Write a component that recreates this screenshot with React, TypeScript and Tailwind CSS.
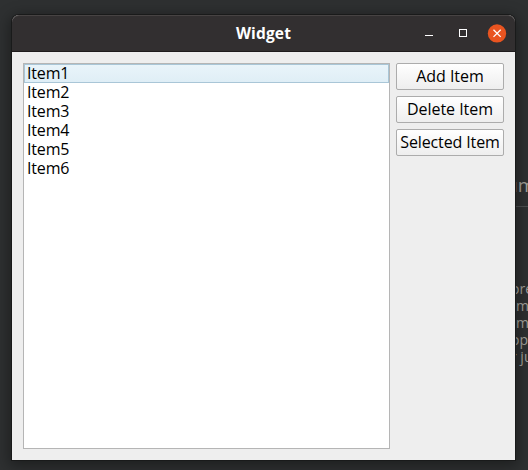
const items = ['Item1', 'Item2', 'Item3', 'Item4', 'Item5', 'Item6'];
const actions = [
  { label: 'Add Item', text: 'tracking-[-0.05px]' },
  { label: 'Delete Item', text: 'tracking-[-0.05px]' },
  { label: 'Selected Item', text: 'tracking-[-0.12px]' },
];
const lines = [
  { text: 'ore', pad: 'pl-[511px]' },
  { text: 'm', pad: 'pl-[516px]' },
  { text: 'm', pad: 'pl-[516px]' },
  { text: 'opp', pad: 'pl-[511px]' },
  { text: 'r ju', pad: 'pl-[511px]' },
];

function Backdrop() {
  return (
    <div className="absolute inset-0 overflow-hidden text-[#a3a19c]">
      <div className="h-[206px] pl-[506px] pt-[172px] text-[19px] leading-[27px]">um</div>
      <div className="ml-[500px] h-px bg-[#4c4f50]" />
      <div className="mt-[73px] text-[14px] leading-[17px]">
        {lines.map((line, i) => (
          <div key={i} className={`h-[17px] whitespace-pre ${line.pad}`}>
            {line.text}
          </div>
        ))}
      </div>
    </div>
  );
}

function TitleBar() {
  return (
    <header className="grid h-[37px] shrink-0 grid-cols-[1fr_auto_1fr] items-center rounded-t-[7px] border-b border-t border-b-[#1f1c1d] border-t-[#474343] bg-[#322f30] text-white">
      <span />
      <h1 className="-mt-px text-[15.5px] font-bold leading-[20px] tracking-[0.15px]">Widget</h1>
      <div className="flex items-center justify-end pr-[8px]">
        <svg width="82" height="19" viewBox="0 0 82 19" fill="none">
          <path d="M0 11.5h8" stroke="white" />
          <rect x="34.5" y="5.5" width="7" height="7" stroke="white" />
          <circle cx="72" cy="9.4" r="9.2" fill="#e95420" />
          <path d="M68.5 5.7l7.2 7.2M75.7 5.7l-7.2 7.2" stroke="white" strokeWidth="1.3" />
        </svg>
      </div>
    </header>
  );
}

export default function App() {
  return (
    <div className="relative h-[470px] w-[528px] overflow-hidden bg-[#2e3031] font-['Open_Sans','Noto_Sans',sans-serif]">
      <Backdrop />
      <main className="absolute left-[12px] top-[15px] flex h-[445px] w-[503px] flex-col rounded-t-[7px] bg-[#eeeeee] shadow-[0_0_0_1px_#191a1a,0_3px_14px_3px_rgba(0,0,0,0.36)]">
        <TitleBar />
        <section className="flex min-h-0 flex-1 gap-[6px] p-[11px]">
          <ul className="w-[367px] border border-[#b5b5b5] bg-white text-[16px] tracking-[-0.15px] text-black">
            {items.map((item, i) => (
              <li
                key={item}
                className={
                  i === 0
                    ? 'h-[19px] border border-[#a9c6d7] bg-linear-to-b from-[#e9f4fa] to-[#dfeef6] pl-[2px] leading-[16px]'
                    : 'h-[19px] pl-[3px] leading-[18px]'
                }
              >
                {item}
              </li>
            ))}
          </ul>
          <div className="flex w-[108px] flex-col gap-[6px]">
            {actions.map((action) => (
              <button
                key={action.label}
                className={`flex h-[27px] items-center justify-center whitespace-nowrap rounded-[2px] border border-[#acacac] bg-linear-to-b from-white to-[#eeeeee] pb-[2px] text-[16px] leading-[20px] text-black ${action.text}`}
              >
                {action.label}
              </button>
            ))}
          </div>
        </section>
      </main>
    </div>
  );
}
